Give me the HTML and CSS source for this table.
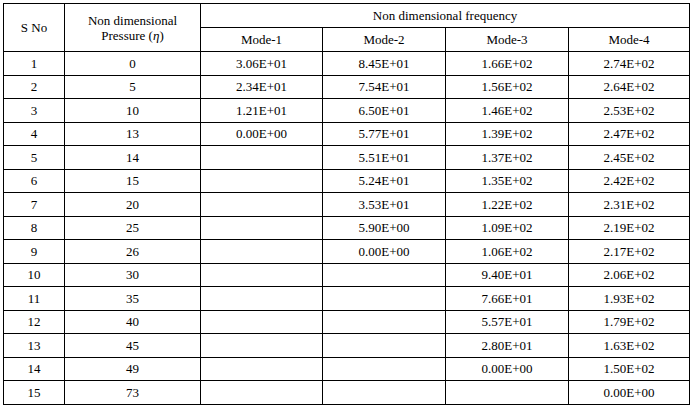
FILE: index.html
```html
<!DOCTYPE html>
<html>
<head>
<meta charset="utf-8">
<link rel="stylesheet" href="styles.css">
</head>
<body>
<table class="data">
<colgroup>
<col class="c-sno"><col class="c-p"><col class="c-m1"><col class="c-m2"><col class="c-m3"><col class="c-m4">
</colgroup>
<thead>
<tr class="hrow"><th rowspan="2">S No</th><th rowspan="2">Non dimensional<br>Pressure (<i>η</i>)</th><th colspan="4">Non dimensional frequency</th></tr>
<tr class="hrow"><th>Mode-1</th><th>Mode-2</th><th>Mode-3</th><th>Mode-4</th></tr>
</thead>
<tbody>
<tr><td>1</td><td>0</td><td>3.06E+01</td><td>8.45E+01</td><td>1.66E+02</td><td>2.74E+02</td></tr>
<tr><td>2</td><td>5</td><td>2.34E+01</td><td>7.54E+01</td><td>1.56E+02</td><td>2.64E+02</td></tr>
<tr><td>3</td><td>10</td><td>1.21E+01</td><td>6.50E+01</td><td>1.46E+02</td><td>2.53E+02</td></tr>
<tr><td>4</td><td>13</td><td>0.00E+00</td><td>5.77E+01</td><td>1.39E+02</td><td>2.47E+02</td></tr>
<tr><td>5</td><td>14</td><td></td><td>5.51E+01</td><td>1.37E+02</td><td>2.45E+02</td></tr>
<tr><td>6</td><td>15</td><td></td><td>5.24E+01</td><td>1.35E+02</td><td>2.42E+02</td></tr>
<tr><td>7</td><td>20</td><td></td><td>3.53E+01</td><td>1.22E+02</td><td>2.31E+02</td></tr>
<tr><td>8</td><td>25</td><td></td><td>5.90E+00</td><td>1.09E+02</td><td>2.19E+02</td></tr>
<tr><td>9</td><td>26</td><td></td><td>0.00E+00</td><td>1.06E+02</td><td>2.17E+02</td></tr>
<tr><td>10</td><td>30</td><td></td><td></td><td>9.40E+01</td><td>2.06E+02</td></tr>
<tr><td>11</td><td>35</td><td></td><td></td><td>7.66E+01</td><td>1.93E+02</td></tr>
<tr><td>12</td><td>40</td><td></td><td></td><td>5.57E+01</td><td>1.79E+02</td></tr>
<tr><td>13</td><td>45</td><td></td><td></td><td>2.80E+01</td><td>1.63E+02</td></tr>
<tr><td>14</td><td>49</td><td></td><td></td><td>0.00E+00</td><td>1.50E+02</td></tr>
<tr><td>15</td><td>73</td><td></td><td></td><td></td><td>0.00E+00</td></tr>
</tbody>
</table>
</body>
</html>
```
FILE: styles.css
```css
html, body {
  margin: 0;
  padding: 0;
  background: #fff;
}
body {
  padding: 3px 0 0 3px;
  font-family: "Liberation Serif", "Times New Roman", serif;
  font-size: 13px;
  color: #000;
}
.data {
  border-collapse: collapse;
  table-layout: fixed;
  width: 686px;
}
.c-sno { width: 61px; }
.c-p { width: 136px; }
.c-m1 { width: 122px; }
.c-m2 { width: 123px; }
.c-m3 { width: 123px; }
.c-m4 { width: 121px; }
.data th, .data td {
  border: 1px solid #000;
  padding: 0;
  text-align: center;
  vertical-align: middle;
  font-weight: normal;
  line-height: 15px;
}
.hrow { height: 24px; }
.data tbody tr { height: 23.53px; }
```
